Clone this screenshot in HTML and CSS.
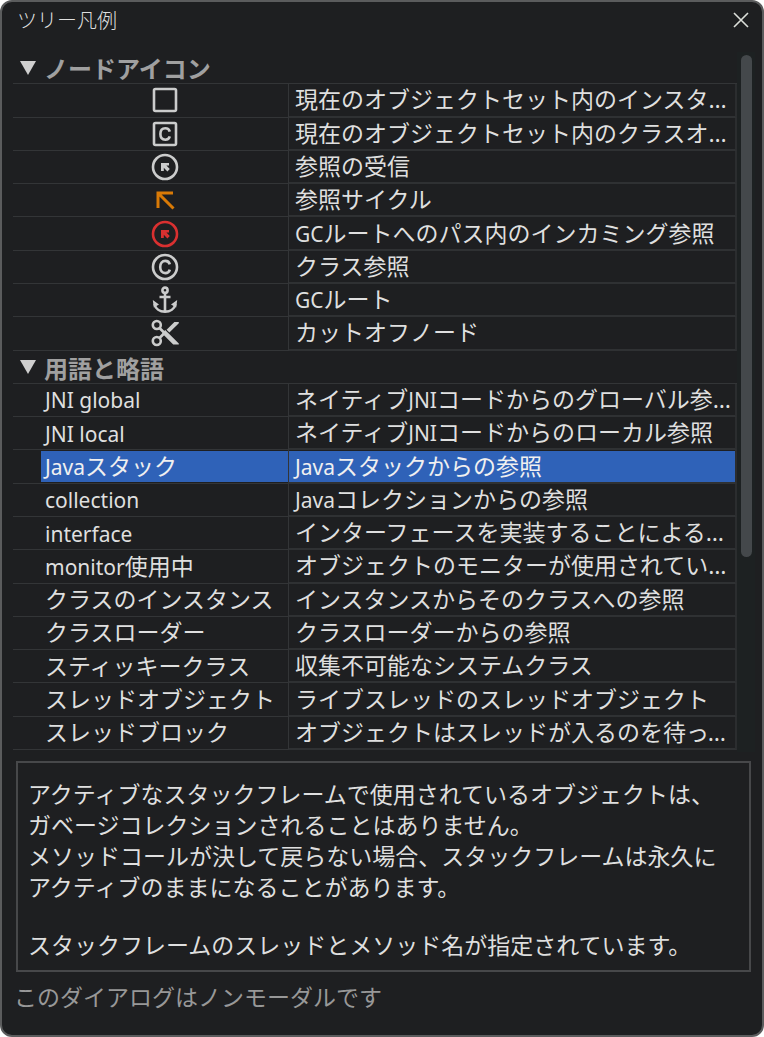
FILE: index.html
```html
<!DOCTYPE html>
<html lang="ja">
<head>
    <meta charset="UTF-8">
    <meta name="viewport" content="width=device-width, initial-scale=1.0">
    <title>ツリー凡例</title>
    <link rel="stylesheet" href="styles.css">
</head>
<body>
    <div class="dialog" role="dialog" aria-labelledby="dialog-title">
        <header class="titlebar">
            <h1 id="dialog-title">ツリー凡例</h1>
            <button class="close" aria-label="閉じる">
                <svg width="16" height="16" viewBox="0 0 16 16"><path d="M1 1L15 15M15 1L1 15" stroke="#dcdfda" stroke-width="1.6" fill="none"/></svg>
            </button>
        </header>

        <div class="tree-pane">
            <table class="tree">
                <colgroup>
                    <col class="col-term">
                    <col>
                </colgroup>
                <!-- Node icons -->
                <tbody>
                    <tr class="group">
                        <th colspan="2"><button class="toggle" aria-expanded="true"><svg width="16" height="14" viewBox="0 0 16 14"><path d="M0 0H16L8 14Z" fill="#cfcfcf"/></svg><span>ノードアイコン</span></button></th>
                    </tr>
                    <tr>
                        <td class="icon"><svg width="28" height="28" viewBox="0 0 28 28"><rect x="3" y="3" width="22" height="22" rx="1.5"/></svg></td>
                        <td><div class="cell">現在のオブジェクトセット内のインスタンス</div></td>
                    </tr>
                    <tr>
                        <td class="icon"><svg width="28" height="28" viewBox="0 0 28 28"><rect x="3" y="3" width="22" height="22" rx="1.5"/><path d="M18.8 11.6C18.2 9.4 16.6 8.3 14.3 8.3C11.2 8.3 9.4 10.6 9.4 14S11.2 19.7 14.3 19.7C16.6 19.7 18.2 18.6 18.8 16.4"/></svg></td>
                        <td><div class="cell">現在のオブジェクトセット内のクラスオブジェクト</div></td>
                    </tr>
                    <tr>
                        <td class="icon"><svg width="28" height="28" viewBox="0 0 28 28"><circle cx="14" cy="14" r="12"/><path class="solid" d="M10 10H18V12.6H15.4L18.8 16L16.4 18.4L12.8 14.8V18H10Z"/></svg></td>
                        <td><div class="cell">参照の受信</div></td>
                    </tr>
                    <tr>
                        <td class="icon orange"><svg width="28" height="28" viewBox="0 0 28 28"><path d="M7 22V7H22M7.5 7.5L22.5 22.5"/></svg></td>
                        <td><div class="cell">参照サイクル</div></td>
                    </tr>
                    <tr>
                        <td class="icon red"><svg width="28" height="28" viewBox="0 0 28 28"><circle cx="14" cy="14" r="12"/><path class="solid" d="M10 10H18V12.6H15.4L18.8 16L16.4 18.4L12.8 14.8V18H10Z"/></svg></td>
                        <td><div class="cell"><span class="latin">GC</span>ルートへのパス内のインカミング参照</div></td>
                    </tr>
                    <tr>
                        <td class="icon"><svg width="28" height="28" viewBox="0 0 28 28"><circle cx="14" cy="14" r="12"/><path d="M18.8 11.4C18.2 9.1 16.6 7.9 14.3 7.9C11.2 7.9 9.2 10.3 9.2 14S11.2 20.1 14.3 20.1C16.6 20.1 18.2 18.9 18.8 16.6"/></svg></td>
                        <td><div class="cell">クラス参照</div></td>
                    </tr>
                    <tr>
                        <td class="icon"><svg width="28" height="28" viewBox="0 0 28 28"><circle cx="14" cy="4.2" r="2.6"/><path d="M14 7V25M8.5 11H19.5M3.5 18C4.5 23 9 25.7 14 25.7S23.5 23 24.5 18"/><path class="solid" d="M1.8 14L8 18.6L2.8 21.5ZM26.2 14L20 18.6L25.2 21.5Z"/></svg></td>
                        <td><div class="cell"><span class="latin">GC</span>ルート</div></td>
                    </tr>
                    <tr>
                        <td class="icon"><svg width="28" height="28" viewBox="0 0 28 28"><circle cx="5.8" cy="6" r="4"/><circle cx="5.8" cy="22" r="4"/><path d="M8.5 9L14 14.5M8.5 19L13.5 14"/><path class="solid" d="M11 14.2L14.2 11L27.8 24.4V25.4H22.2ZM15.6 10.8L23.4 3H27.8V4.2L18.4 13.6Z"/></svg></td>
                        <td><div class="cell">カットオフノード</div></td>
                    </tr>
                </tbody>
                <!-- Terms -->
                <tbody>
                    <tr class="group">
                        <th colspan="2"><button class="toggle" aria-expanded="true"><svg width="16" height="14" viewBox="0 0 16 14"><path d="M0 0H16L8 14Z" fill="#cfcfcf"/></svg><span>用語と略語</span></button></th>
                    </tr>
                    <tr>
                        <td class="term"><div class="cell"><span class="latin">JNI global</span></div></td>
                        <td><div class="cell">ネイティブ<span class="latin">JNI</span>コードからのグローバル参照</div></td>
                    </tr>
                    <tr>
                        <td class="term"><div class="cell"><span class="latin">JNI local</span></div></td>
                        <td><div class="cell">ネイティブ<span class="latin">JNI</span>コードからのローカル参照</div></td>
                    </tr>
                    <tr class="selected" aria-selected="true">
                        <td class="term"><div class="cell"><span class="latin">Java</span>スタック</div></td>
                        <td><div class="cell"><span class="latin">Java</span>スタックからの参照</div></td>
                    </tr>
                    <tr>
                        <td class="term"><div class="cell"><span class="latin">collection</span></div></td>
                        <td><div class="cell"><span class="latin">Java</span>コレクションからの参照</div></td>
                    </tr>
                    <tr>
                        <td class="term"><div class="cell"><span class="latin">interface</span></div></td>
                        <td><div class="cell">インターフェースを実装することによる参照</div></td>
                    </tr>
                    <tr>
                        <td class="term"><div class="cell"><span class="latin">monitor</span>使用中</div></td>
                        <td><div class="cell">オブジェクトのモニターが使用されています</div></td>
                    </tr>
                    <tr>
                        <td class="term"><div class="cell">クラスのインスタンス</div></td>
                        <td><div class="cell">インスタンスからそのクラスへの参照</div></td>
                    </tr>
                    <tr>
                        <td class="term"><div class="cell">クラスローダー</div></td>
                        <td><div class="cell">クラスローダーからの参照</div></td>
                    </tr>
                    <tr>
                        <td class="term"><div class="cell">スティッキークラス</div></td>
                        <td><div class="cell">収集不可能なシステムクラス</div></td>
                    </tr>
                    <tr>
                        <td class="term"><div class="cell">スレッドオブジェクト</div></td>
                        <td><div class="cell">ライブスレッドのスレッドオブジェクト</div></td>
                    </tr>
                    <tr>
                        <td class="term"><div class="cell">スレッドブロック</div></td>
                        <td><div class="cell">オブジェクトはスレッドが入るのを待っています</div></td>
                    </tr>
                </tbody>
            </table>
            <div class="scrollbar"><div class="thumb"></div></div>
        </div>

        <section class="description">
            <p>アクティブなスタックフレームで使用されているオブジェクトは、<br>ガベージコレクションされることはありません。<br>メソッドコールが決して戻らない場合、スタックフレームは永久に<br>アクティブのままになることがあります。</p>
            <p>スタックフレームのスレッドとメソッド名が指定されています。</p>
        </section>

        <footer class="status">このダイアログはノンモーダルです</footer>
    </div>
</body>
</html>
```
FILE: styles.css
```css
* {
    box-sizing: border-box;
}

body {
    margin: 0;
    background-color: #fff;
    color: #dfdfdf;
    font-family: "Noto Sans", "Noto Sans CJK JP", sans-serif;
    font-size: 23px;
}

.dialog {
    display: flex;
    flex-direction: column;
    min-height: 100vh;
    background-color: #1e1f21;
    border: 2px solid #5b5c5d;
    border-radius: 12px;
    overflow: hidden;
}

button {
    padding: 0;
    border: none;
    background: none;
    color: inherit;
    font: inherit;
    cursor: pointer;
}

/* Title bar */
.titlebar {
    display: flex;
    justify-content: space-between;
    align-items: flex-start;
    height: 49px;
    padding: 3px 13px 0 15px;
}

.titlebar h1 {
    margin: 0;
    font-size: 20px;
    font-weight: 300;
    line-height: 32px;
}

.close {
    display: flex;
    align-items: center;
    height: 30px;
}

/* Tree */
.tree-pane {
    display: grid;
    grid-template-columns: minmax(0, 1fr) 18px;
    flex: 1;
    margin: 0 7px 0 11px;
}

.tree {
    width: 100%;
    table-layout: fixed;
    border-spacing: 0;
    margin-bottom: 2px;
}

.col-term {
    width: 276px;
}

.tree th,
.tree td {
    padding: 0;
    border-bottom: 1px solid #333537;
}

.tree td:first-child {
    border-right: 1px solid #333537;
}

.tree td + td {
    border-right: 2px solid #2b2d2f;
    border-bottom: 2px solid #2f3133;
}

.toggle {
    display: flex;
    align-items: center;
    gap: 8px;
    padding-top: 1px;
    padding-left: 7px;
    color: #a0a0a0;
    font-weight: bold;
    font-size: 24px;
    line-height: 31px;
}

.toggle span {
    padding-top: 3px;
    line-height: 28px;
}

.cell {
    padding-left: 6px;
    line-height: 31px;
    white-space: nowrap;
    overflow: hidden;
    text-overflow: ellipsis;
}

.term .cell {
    margin-left: 28px;
    padding-left: 4px;
}

.latin {
    font-size: 21px;
    line-height: 21px;
}

.selected .cell {
    background-color: #2f62b8;
    color: #f0f0f0;
}

.tree .icon {
    padding-left: 28px;
}

.icon svg {
    display: block;
    margin: 0 auto;
    fill: none;
    stroke: #cbcccc;
    stroke-width: 2.6;
}

.icon .solid {
    fill: #cbcccc;
    stroke: none;
}

.orange svg {
    stroke: #d97a06;
    stroke-width: 3;
}

.red svg {
    stroke: #d93030;
}

.red .solid {
    fill: #d93030;
}

/* Scrollbar */
.scrollbar {
    margin-top: 1px;
    padding: 3px 3px 0 4px;
    background-color: #1d2122;
}

.thumb {
    width: 11px;
    height: 72%;
    background-color: #44484b;
    border-radius: 6px;
}

/* Description of the selected entry */
.description {
    margin: 9px 11px 0 14px;
    padding: 16px 10px 9px;
    border: 2px solid #47484a;
    line-height: 31px;
}

.description p {
    margin: 0 0 27px;
}

.description p:last-child {
    margin: 0;
}

.status {
    padding: 10px 12px 22px;
    color: #989898;
    line-height: 31px;
}
```
